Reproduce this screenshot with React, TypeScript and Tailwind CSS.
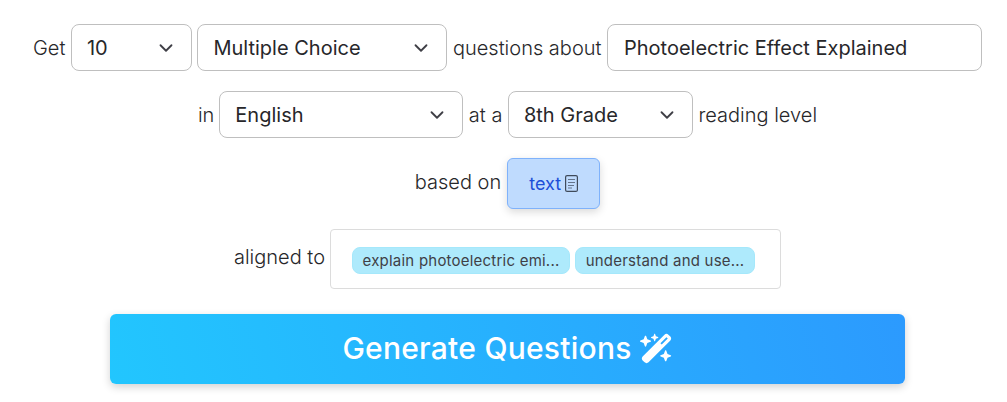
import { FaWandMagicSparkles } from "react-icons/fa6";
import { ChevronDown } from "lucide-react";

function Select({ value, width }: { value: string; width: string }) {
  return (
    <div
      className={`flex h-[47px] items-center justify-between rounded-lg border border-[#bfbfbf] bg-white pl-[15px] pr-[14px] text-[20px] text-[#27272a] ${width}`}
    >
      <span>{value}</span>
      <ChevronDown size={22} strokeWidth={2} className="text-[#3f3f46]" />
    </div>
  );
}

function Label({ children }: { children: string }) {
  return <span className="font-light text-[20px] text-[#27272a]">{children}</span>;
}

function Chip({ children, width }: { children: string; width: string }) {
  return (
    <span
      className={`flex h-[27px] items-center justify-center rounded-lg border border-[#a5e8fb] bg-[#aeeafc] pt-[2px] text-[15px] tracking-[0.22px] text-[#3f3f46] ${width}`}
    >
      {children}
    </span>
  );
}

export default function App() {
  return (
    <div className="flex h-[402px] w-[1007px] flex-col items-center gap-5 overflow-hidden bg-white pl-2 pt-6 font-['Inter',sans-serif]">
      <div className="flex items-center gap-[5.5px]">
        <Label>Get</Label>
        <Select value="10" width="w-[121px]" />
        <Select value="Multiple Choice" width="w-[250px]" />
        <Label>questions about</Label>
        <div className="flex h-[47px] w-[375px] items-center rounded-lg border border-[#bfbfbf] px-4 text-[20px] text-[#27272a]">
          Photoelectric Effect Explained
        </div>
      </div>
      <div className="flex items-center gap-[5.5px]">
        <span className="mr-[-0.5px] text-[20px] font-light text-[#27272a]">in</span>
        <Select value="English" width="w-[244px]" />
        <Label>at a</Label>
        <Select value="8th Grade" width="w-[185px]" />
        <Label>reading level</Label>
      </div>
      <div className="flex items-center gap-[6px]">
        <span className="pb-1 text-[20px] font-light text-[#27272a]">based on</span>
        <button className="flex h-[51px] w-[93px] items-center justify-center gap-1 rounded-md border border-[#7fb2fb] bg-[#bfdbfe] text-[18px] text-[#1d4ed8] shadow-[0_3px_8px_rgba(0,0,0,0.15)]">
          text
          <svg width="13" height="17" viewBox="0 0 13 17" fill="none" stroke="#3f4a5a" strokeWidth="1.2">
            <rect x="0.6" y="0.6" width="11.8" height="15.8" rx="1.5" />
            <path d="M3 4.5h7M3 7.5h7M3 10.5h6M3 13h4" stroke="#64748b" />
          </svg>
        </button>
      </div>
      <div className="flex items-center gap-[5px]">
        <span className="pb-1 text-[20px] font-light text-[#27272a]">aligned to</span>
        <div className="flex h-[60px] w-[451px] items-center gap-[5px] rounded border border-[#dcdcdc] pl-[21px] pt-[2px]">
          <Chip width="w-[218px]">explain photoelectric emi...</Chip>
          <Chip width="w-[180px]">understand and use...</Chip>
        </div>
      </div>
      <button className="mt-[5px] flex h-[70px] w-[795px] shrink-0 items-center justify-center gap-2 rounded-md bg-[linear-gradient(75deg,#22c6fe,#2c9afe)] pb-[2px] text-[30px] font-medium tracking-[0.25px] text-white shadow-[0_3px_8px_rgba(0,0,0,0.18)]">
        Generate Questions
        <FaWandMagicSparkles size={33} />
      </button>
    </div>
  );
}
